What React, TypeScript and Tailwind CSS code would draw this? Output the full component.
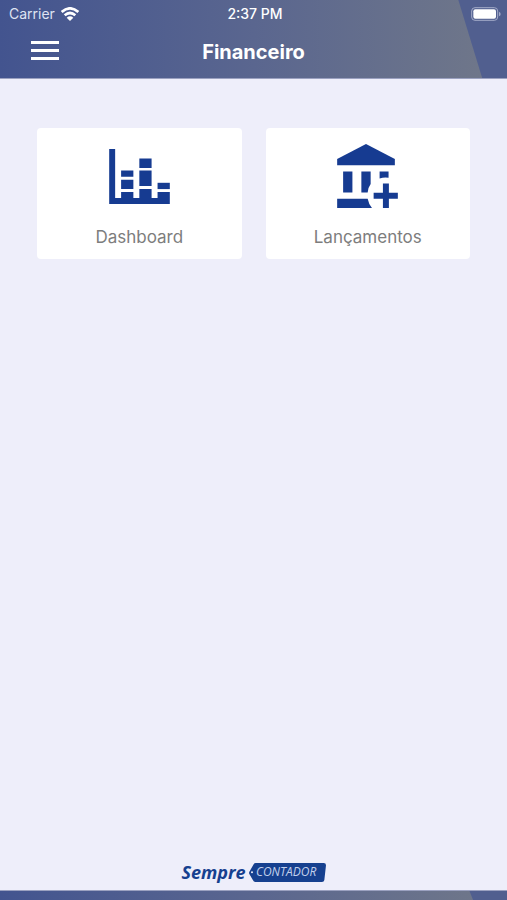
import { ReactNode } from 'react';

type MenuCardProps = {
  label: string;
  href: string;
  icon: ReactNode;
};

const DashboardIcon = () => (
  <svg
    viewBox="57 42 183 166"
    className="h-[55px] w-[61px]"
    fill="currentColor"
    aria-hidden="true"
  >
    <path d="M57 42h18v148h18v-18h37v18h18v-27h37v27h18v-18h37v36H57z" />
    <path d="M93 107h37v19H93zM93 135h37v28H93z" />
    <path d="M148 71h37v28h-37zM148 107h37v47h-37z" />
    <path d="M203 144h37v19h-37z" />
  </svg>
);

const BankPlusIcon = () => (
  <svg
    viewBox="53 40 183 193"
    className="h-16 w-[61px]"
    fill="currentColor"
    aria-hidden="true"
  >
    <path d="M53 85l87-45 87 45v19H53z" />
    <path d="M71 123h28v63H71zM126 123h28v38q-8 11-9 25h-19z" />
    <path d="M181 123h27v19q-14-2-27 2z" />
    <path d="M53 205h92q3 16 13 28H53z" />
    <path d="M191 159h18v28h27v18h-27v28h-18v-28h-28v-18h28z" />
  </svg>
);

const WifiIcon = () => (
  <svg viewBox="0 0 54 42" className="h-3.5 w-[18px]" aria-label="Wi-Fi">
    <g fill="none" stroke="currentColor" strokeWidth="8">
      <path d="M2 15q25-22 50 0" />
      <path d="M11 25q16-14 32 0" />
    </g>
    <path fill="currentColor" d="M17 32q10-8 20 0L27 42z" />
  </svg>
);

const BatteryIcon = () => (
  <svg viewBox="0 0 90 42" className="h-3.5 w-[30px]" aria-label="Battery">
    <rect
      x="2"
      y="2"
      width="78"
      height="38"
      rx="10"
      fill="none"
      stroke="#a3aac8"
      strokeWidth="3"
    />
    <rect x="7" y="7" width="68" height="28" rx="6" fill="#fff" />
    <path d="M84 14q5 2 5 7t-5 7z" fill="#a3aac8" />
  </svg>
);

const BrandBackground = () => (
  <div className="absolute inset-0 bg-linear-to-r from-[#43548f] via-[#5a668f] to-[#717889] [clip-path:polygon(0_0,90.4%_0,95.1%_100%,0_100%)]" />
);

const MenuCard = ({ label, href, icon }: MenuCardProps) => (
  <a
    href={href}
    className="flex h-[131px] flex-col items-center justify-between rounded bg-white pt-[15px] pb-2.5 text-[#163b91]"
  >
    <span className="flex h-[66px] items-center">{icon}</span>
    <span className="text-[17px] leading-6 text-[#7d7d7d]">{label}</span>
  </a>
);

const Header = () => (
  <header className="relative border-b border-[#9ba1c0] bg-[#515f8f] text-white">
    <BrandBackground />
    <div className="relative grid h-7 grid-cols-3 items-center pr-1.5 pl-[9px] text-[14px] leading-4">
      <div className="flex items-center gap-1.5 text-[#dfe3f2]">
        Carrier
        <span className="text-white">
          <WifiIcon />
        </span>
      </div>
      <div className="text-center font-medium">2:37 PM</div>
      <div className="flex justify-end">
        <BatteryIcon />
      </div>
    </div>
    <div className="relative flex h-[50px] items-start justify-center pt-2">
      <button
        type="button"
        aria-label="Menu"
        className="absolute top-[13px] left-[31px] flex w-7 flex-col gap-[5px]"
      >
        <span className="h-[3px] bg-white" />
        <span className="h-[3px] bg-white" />
        <span className="h-[3px] bg-white" />
      </button>
      <h1 className="text-[20px] leading-8 font-bold">Financeiro</h1>
    </div>
  </header>
);

const Logo = () => (
  <div className="flex items-center justify-center gap-[3px] font-['Open_Sans',sans-serif] italic">
    <span className="text-[18px] leading-5 font-bold text-[#16408f]">
      Sempre
    </span>
    <span className="relative flex h-[19px] w-[77px] items-center justify-center pr-0.5">
      <svg
        viewBox="0 0 231 57"
        className="absolute inset-0 h-full w-full"
        aria-hidden="true"
      >
        <path
          d="M20 0h204q7 0 7 7l-5 44q-1 6-7 6H19q-5 0-7-5L1 33q-2-4 1-8L14 4q2-4 6-4z"
          fill="#16408f"
        />
        <circle cx="9" cy="28" r="3" fill="#eeeefa" />
      </svg>
      <span className="relative text-[12px] leading-4 text-[#c3d0ec]">
        CONTADOR
      </span>
    </span>
  </div>
);

const App = () => (
  <div className="flex min-h-screen flex-col bg-[#eeeefa] font-[Inter,sans-serif]">
    <Header />
    <main className="grid flex-1 grid-cols-2 content-start gap-6 px-[37px] pt-[49px]">
      <MenuCard label="Dashboard" href="#dashboard" icon={<DashboardIcon />} />
      <MenuCard
        label="Lançamentos"
        href="#lancamentos"
        icon={<BankPlusIcon />}
      />
    </main>
    <footer>
      <div className="pb-2">
        <Logo />
      </div>
      <div className="relative h-2.5 border-t border-[#9ba1c0] bg-[#515f8f]">
        <div className="absolute inset-0 bg-linear-to-r from-[#43548f] via-[#5a668f] to-[#717889] [clip-path:polygon(0_0,92.6%_0,93.3%_100%,0_100%)]" />
      </div>
    </footer>
  </div>
);

export default App;
